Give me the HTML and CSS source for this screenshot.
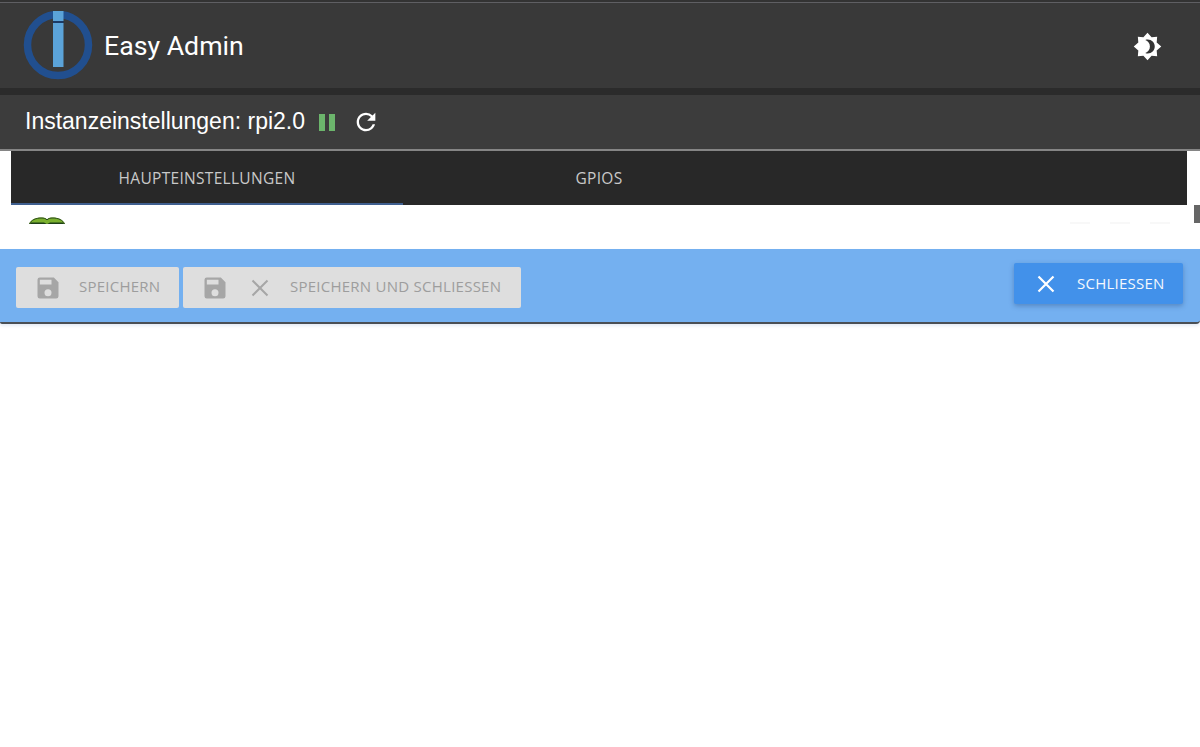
FILE: index.html
```html
<!DOCTYPE html>
<html lang="de">
<head>
<meta charset="utf-8">
<title>Easy Admin</title>
<link rel="stylesheet" href="styles.css">
</head>
<body>
<div class="app">
  <header class="appbar">
    <div class="brand">
      <svg class="logo" viewBox="0 0 70 70" width="70" height="70">
        <circle cx="35" cy="34" r="30.500" fill="none" stroke="#214f8f" stroke-width="7.500"/>
        <rect x="30" y="10" width="10.500" height="2" fill="#1b3a66"/>
        <rect x="30" y="0" width="10.500" height="10" fill="#5ba3d9"/>
        <rect x="30" y="12" width="10.500" height="44" fill="#5ba3d9"/>
      </svg>
      <span class="brand-name">Easy Admin</span>
    </div>
    <svg class="theme" viewBox="0 0 24 24" width="29" height="29">
      <path fill="#fff" d="M12 .6 15.4 4.4 20 4 19.6 8.6 23.4 12 19.6 15.4 20 20 15.4 19.6 12 23.4 8.6 19.6 4 20 4.4 15.4.6 12 4.4 8.6 4 4 8.6 4.4Z"/>
      <path fill="#333" d="M12.2 6.2c3.2 0 5.8 2.6 5.8 5.8s-2.600 5.800-5.800 5.800c-.7 0-1.400-.1-2-.4 2.200-.8 3.800-2.900 3.800-5.400s-1.600-4.600-3.800-5.400c.6-.3 1.300-.4 2-.4Z"/>
    </svg>
  </header>
  <div class="titlebar">
    <span class="title-text">Instanzeinstellungen: rpi2.0</span>
    <span class="pause"><i></i><i></i></span>
    <svg class="reload" viewBox="0 0 24 24" width="28" height="28">
      <path fill="#fff" d="M17.650 6.350A7.958 7.958 0 0 0 12 4c-4.420 0-7.990 3.580-7.990 8s3.570 8 7.990 8c3.730 0 6.840-2.550 7.730-6h-2.080A5.990 5.990 0 0 1 12 18c-3.310 0-6-2.690-6-6s2.690-6 6-6c1.660 0 3.140.69 4.220 1.780L13 11h7V4l-2.350 2.350z"/>
    </svg>
  </div>
  <main class="dialog">
    <nav class="tabs">
      <div class="tab tab-active">HAUPTEINSTELLUNGEN</div>
      <div class="tab">GPIOS</div>
    </nav>
    <section class="peek">
      <svg class="leaf" viewBox="0 0 36 8" width="36" height="8">
        <path fill="#7ab02e" d="M0 8C2 3.500 7 1.500 12 1.500c3 0 5 .5 6 2 1-1.500 3-2 6-2 5 0 10 2 12 6.500Z"/>
        <path fill="none" stroke="#2a4a1c" stroke-width="1" d="M.5 8C2 4 7 2 12 2c3 0 5 .5 6 2 1-1.500 3-2 6-2 5 0 10 2 11.500 6"/>
        <path fill="#1d3f16" d="M2 6.500h13L18 8H1Zm32 0H21L18 8h17Z"/>
      </svg>
      <div class="ghosts"><i></i><i></i><i></i></div>
      <div class="scroll-thumb"></div>
    </section>
    <footer class="toolbar">
      <button class="btn btn-off btn-save" type="button" disabled>
        <svg class="ico" viewBox="0 0 24 24" width="28" height="28"><path fill="#a6a6a6" d="M17 3H5a2 2 0 0 0-2 2v14a2 2 0 0 0 2 2h14a2 2 0 0 0 2-2V7l-4-4zm-5 16a3 3 0 1 1 0-6 3 3 0 0 1 0 6zm3-10H5V5h10v4z"/></svg>
        <span class="lbl-save">SPEICHERN</span>
      </button>
      <button class="btn btn-off btn-wide" type="button" disabled>
        <svg class="ico" viewBox="0 0 24 24" width="28" height="28"><path fill="#a6a6a6" d="M17 3H5a2 2 0 0 0-2 2v14a2 2 0 0 0 2 2h14a2 2 0 0 0 2-2V7l-4-4zm-5 16a3 3 0 1 1 0-6 3 3 0 0 1 0 6zm3-10H5V5h10v4z"/></svg>
        <svg class="ico-x" viewBox="0 0 18 18" width="18" height="18"><path stroke="#a6a6a6" stroke-width="2" d="M1.500 1.500l15 15M16.500 1.500l-15 15"/></svg>
        <span class="lbl-both">SPEICHERN UND SCHLIESSEN</span>
      </button>
      <button class="btn btn-close" type="button">
        <svg class="ico-x" viewBox="0 0 18 18" width="18" height="18"><path stroke="#fff" stroke-width="2.200" d="M1.500 1.500l15 15M16.500 1.500l-15 15"/></svg>
        <span class="lbl-close">SCHLIESSEN</span>
      </button>
    </footer>
    <div class="blank"></div>
  </main>
</div>
</body>
</html>
```
FILE: styles.css
```css
* { box-sizing: border-box; }
html, body { margin: 0; height: 100%; background: #fff; }
body { overflow: hidden; }
.app { width: 1200px; height: 747px; display: flex; flex-direction: column; font-family: "Liberation Sans", Arial, sans-serif; }

.appbar {
  height: 95px; flex: none; display: flex; align-items: flex-start; justify-content: space-between;
  background: #393939;
  border-top: 2px solid #333;
  border-bottom: 7px solid #2b2b2b;
  box-shadow: inset 0 1px 0 #5f5f63;
  padding: 9px 38px 0 23px;
}
.brand { display: flex; align-items: flex-start; gap: 11px; }
.logo { display: block; flex: none; }
.brand-name { font-family: Roboto, sans-serif; font-size: 26.700px; line-height: 32px; color: #fff; margin-top: 19px; }
.theme { display: block; margin-top: 21px; }

.titlebar {
  height: 56px; flex: none; display: flex; align-items: center;
  background: #3c3c3c;
  border-bottom: 2px solid #858585;
  padding: 0 0 0 25px;
}
.title-text { font-size: 23px; line-height: 26px; color: #fff; margin-top: -3px; }
.pause { display: flex; gap: 4px; margin: 1px 0 0 14px; }
.pause i { display: block; width: 6px; height: 17px; background: #6cb56c; }
.reload { margin: 0 0 0 17px; display: block; }

.dialog { flex: 1; display: flex; flex-direction: column; background: #fff; }
.tabs { height: 54px; flex: none; margin: 0 13px 0 11px; display: flex; background: #282828; }
.tab {
  width: 392px; display: flex; align-items: center; justify-content: center;
  font-family: "Open Sans", sans-serif; font-size: 15.500px; letter-spacing: .3px; color: #c9c9c9;
  padding-bottom: 1px;
}
.tab-active { border-bottom: 2px solid #3f5f8f; padding-top: 1px; padding-bottom: 0; }

.peek { height: 44px; flex: none; display: flex; align-items: flex-start; padding: 11px 0 0 29px; overflow: hidden; }
.leaf { display: block; flex: none; }
.ghosts { display: flex; gap: 20px; margin: 6px 0 0 auto; }
.ghosts i { display: block; width: 20px; height: 2px; background: #f8f8f8; }
.scroll-thumb { width: 6px; height: 18px; margin: 0 0 0 24px; background: #666; flex: none; transform: translateY(-11px); }

.toolbar {
  height: 75px; flex: none; display: flex; align-items: flex-start; gap: 4px;
  background: #74b0f0; padding: 18px 17px 0 16px;
  border-bottom: 2px solid #4a4f55;
  border-radius: 0 0 4px 2px;
  box-shadow: 0 2px 3px rgba(90, 130, 190, .15);
}
.btn {
  height: 41px; border: 0; border-radius: 2px; display: flex; align-items: center; padding: 0;
  font-family: "Open Sans", sans-serif; font-size: 15px; letter-spacing: .25px; cursor: pointer;
}
.btn-off { background: #dedede; color: #9d9d9d; }
.btn-save { width: 163px; padding-left: 18px; }
.btn-wide { width: 338px; padding-left: 18px; }
.ico { display: block; flex: none; }
.lbl-save { margin-left: 17px; padding-bottom: 3px; }
.btn-wide .ico-x { margin-left: 22px; }
.lbl-both { margin-left: 21px; padding-bottom: 3px; }
.btn-close {
  margin-left: auto; width: 169px; margin-top: -4px; padding-left: 23px;
  background: #4291ea; color: #f4f8fd;
  box-shadow: 0 2px 5px rgba(30, 60, 110, .35);
}
.lbl-close { margin-left: 22px; padding-bottom: 2px; }
.blank { flex: 1; }
```
